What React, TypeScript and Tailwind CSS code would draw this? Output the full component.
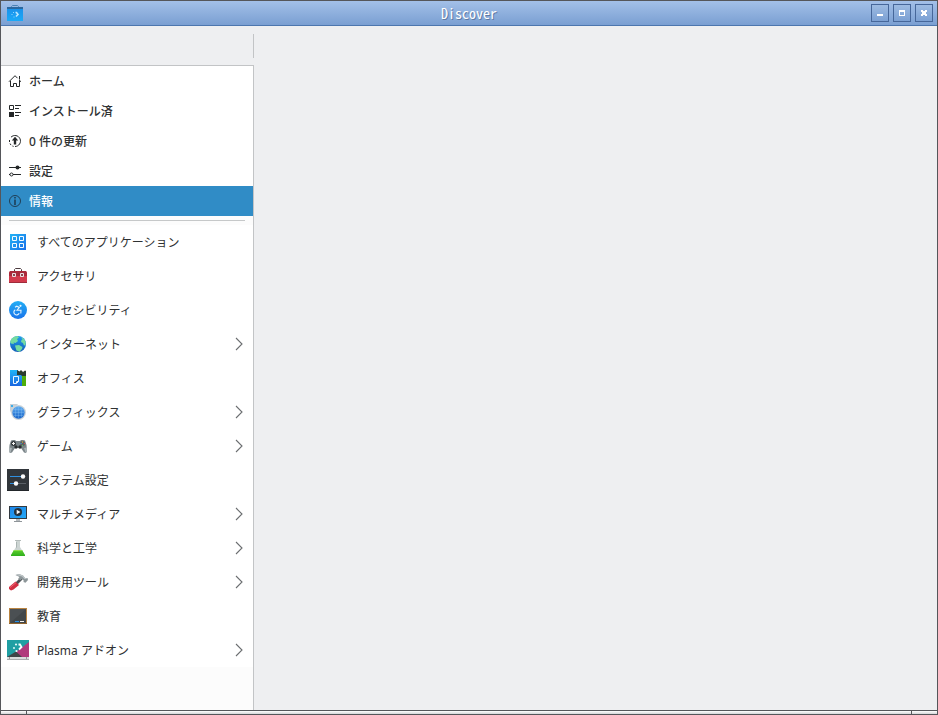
import { FC, ReactNode } from "react";

const HomeIcon: FC = () => (
  <svg className="size-4" viewBox="0 0 16 16" fill="none" stroke="#232627">
    <path d="M2 8.700 8 2.700 10.500 5.200M12 7l2 1.700M12.500 3v3.500" />
    <path d="M3.500 8v5.500h3v-3h3v3h3V8" />
    <path d="M7 10h2v1H7z" fill="#232627" stroke="none" />
  </svg>
);

const InstalledIcon: FC = () => (
  <svg className="size-4" viewBox="0 0 16 16" fill="none" stroke="#232627">
    <path d="M2.500 2.500h4v4h-4zM8 2.500h6M8 5.500h4M8 9.500h6M8 12.500h4" />
    <path d="M2 9h5v5H2z" fill="#232627" stroke="none" />
  </svg>
);

const UpdateIcon: FC = () => (
  <svg className="size-4" viewBox="0 0 16 16" fill="none" stroke="#232627">
    <path d="M4 4.200A5.500 5.500 0 1 1 8 13.500M2.500 7v2M3 10.500l1 1.600M5.400 13l1.200.4" />
    <path d="M8 3.800 11.200 7.500H9.200V11.500H6.800V7.500H4.800z" fill="#232627" stroke="none" />
  </svg>
);

const ConfigureIcon: FC = () => (
  <svg className="size-4" viewBox="0 0 16 16" fill="none" stroke="#232627">
    <path d="M2 4.500h12M2 11.500h1M6 11.500h8" />
    <circle cx="10.500" cy="4.500" r="2" fill="#232627" stroke="none" />
    <circle cx="4.500" cy="11.500" r="1.500" />
  </svg>
);

const InfoIcon: FC = () => (
  <svg className="size-4" viewBox="0 0 16 16" fill="none" stroke="#1f3f57">
    <circle cx="8" cy="8" r="5.500" />
    <path d="M8 4v1.500M8 6.500V12" strokeWidth="1.600" />
  </svg>
);

const AllAppsIcon: FC = () => (
  <svg className="size-[22px]" viewBox="0 0 22 22">
    <defs>
      <linearGradient id="all" x1="0" y1="0" x2="1" y2="1">
        <stop stopColor="#22b3f5" />
        <stop offset="1" stopColor="#1a6fe8" />
      </linearGradient>
    </defs>
    <path d="M3 3h16v16H3z" fill="url(#all)" />
    <path
      d="M5.500 5.500h4v4h-4zM12.500 5.500h4v4h-4zM5.500 12.500h4v4h-4zM12.500 12.500h4v4h-4z"
      fill="none"
      stroke="#f5fbff"
    />
  </svg>
);

const AccessoriesIcon: FC = () => (
  <svg className="size-[22px]" viewBox="0 0 22 22">
    <path d="M7.500 6v-1.500l1-1h5l1 1V6" fill="none" stroke="#4b3b3f" />
    <path d="M3 6h16l1 2v10H2V8z" fill="#d23a4c" />
    <path d="M3 6h16l1 2v3H2V8z" fill="#a92a3b" />
    <path d="M2 17h18v1H2z" fill="#9f2c3b" />
    <path d="M5.500 8.500h3v3h-3zM13.500 8.500h3v3h-3z" fill="#8c4650" stroke="#e8e2e3" />
  </svg>
);

const AccessibilityIcon: FC = () => (
  <svg className="size-[22px]" viewBox="0 0 22 22">
    <defs>
      <linearGradient id="acc" x1="0" y1="0" x2="0" y2="1">
        <stop stopColor="#22aef5" />
        <stop offset="1" stopColor="#1a73ea" />
      </linearGradient>
    </defs>
    <circle cx="11" cy="11" r="9" fill="url(#acc)" />
    <circle cx="13.500" cy="6.800" r="1.100" fill="#e5f4ff" />
    <g fill="none" stroke="#e5f4ff" strokeWidth="1.100">
      <path d="M8 8.200 9.800 7.200l2.500 1.200-2.200 2.800H14l-.2 3.300" />
      <path d="M8.300 10.700a2.800 2.800 0 1 0 3.900 3.600" />
    </g>
  </svg>
);

const InternetIcon: FC = () => (
  <svg className="size-[22px]" viewBox="0 0 22 22">
    <defs>
      <linearGradient id="net" x1="0" y1="0" x2="0" y2="1">
        <stop stopColor="#1f9cf0" />
        <stop offset="1" stopColor="#145fb8" />
      </linearGradient>
    </defs>
    <circle cx="11" cy="11" r="8" fill="url(#net)" />
    <path
      d="M3.200 9C4 5.500 7 3.200 10.500 3L12 4.500 10 6l1 2-2.500 2-2-.5L7 11l-3-.5zM14 4l3 2 1.700 3-.2 3-1.500.5-1-2.500-2-1 .5-2 1-.5zM8 12.500l4-.5 3.500 2-.5 2-2.500 2.700-3-1.200-1-3z"
      fill="#74dba0"
    />
  </svg>
);

const OfficeIcon: FC = () => (
  <svg className="size-[22px]" viewBox="0 0 22 22">
    <defs>
      <linearGradient id="off" x1="0" y1="0" x2="0" y2="1">
        <stop stopColor="#1fb6f6" />
        <stop offset="1" stopColor="#1a66e0" />
      </linearGradient>
    </defs>
    <path d="M3 3h8v4h4v12H3z" fill="url(#off)" />
    <path d="M15 8h4v11h-4z" fill="#4fae0c" />
    <path d="M10 3l2.500 1.500L14 3l2 2 2-1.500 1 .5v5h-4l-1-1h-4z" fill="#2b3b2e" />
    <path d="M6.500 9.500h5v5l-2 2h-3zM9.500 16v-1.500h2" fill="none" stroke="#eaf6ff" />
  </svg>
);

const GraphicsIcon: FC = () => (
  <svg className="size-[22px]" viewBox="0 0 22 22">
    <defs>
      <linearGradient id="gfx" x1="0" y1="0" x2="0" y2="1">
        <stop stopColor="#62aef0" />
        <stop offset="1" stopColor="#1762c8" />
      </linearGradient>
    </defs>
    <path d="M3 3h8l-7 9-1-3z" fill="#c9d0d6" />
    <circle cx="11.500" cy="11.500" r="7.500" fill="#cdd3d8" />
    <path d="M4 4h2v2H4z" fill="#3daee9" />
    <circle cx="11.500" cy="11.500" r="6.200" fill="url(#gfx)" />
    <path
      d="M8.500 6.500v10M11.500 5.500v12M14.500 6.500v10M6.500 8.500h10M5.500 11.500h12M6.500 14.500h10"
      stroke="#8fc9f7"
      strokeOpacity=".45"
      strokeWidth=".7"
    />
  </svg>
);

const GamesIcon: FC = () => (
  <svg className="size-[22px]" viewBox="0 0 22 22">
    <path
      d="M4 5.500 6 5h2l1 1h4l1-1h2l2 .5 1.500 4.500.5 6-1 2-2-.5-3-4.500H8L5 17.500 3 18l-1-2 .5-6z"
      fill="#7b8589"
    />
    <path
      d="M2.300 12.500 5 13l-1.500 4.500-1 .3-.5-2zM19.700 12.500 17 13l1.500 4.500 1-.3.500-2z"
      fill="#aab3b6"
    />
    <circle cx="6.500" cy="8.500" r="2.500" fill="#34393c" />
    <path d="M6.500 7v3M5 8.500h3" stroke="#f3f3f3" />
    <circle cx="15.500" cy="8.500" r="2.500" fill="#5a6265" />
    <path d="M15 6.500h1v1h-1z" fill="#f2c230" />
    <path d="M17 8h1v1h-1z" fill="#e05050" />
    <path d="M13.500 8h1v1h-1z" fill="#4ba7e8" />
    <path d="M15 10h1v1h-1z" fill="#5cc05c" />
    <circle cx="9" cy="12" r="1.700" fill="#272b2d" />
    <circle cx="13" cy="12" r="1.700" fill="#272b2d" />
  </svg>
);

const SettingsIcon: FC = () => (
  <svg className="size-[22px]" viewBox="0 0 22 22">
    <path d="M0 0h22v22H0z" fill="#31363b" />
    <path d="M0 21h22v1H0z" fill="#22262a" />
    <path d="M3 7.500h13M3 14.500h6" stroke="#2f8fe0" />
    <path d="M9 14.500h10" stroke="#5a6067" />
    <circle cx="16" cy="7.500" r="2.200" fill="#fcfcfc" />
    <circle cx="9" cy="14.500" r="2.200" fill="#fcfcfc" />
  </svg>
);

const MultimediaIcon: FC = () => (
  <svg className="size-[22px]" viewBox="0 0 22 22">
    <defs>
      <linearGradient id="mm" x1="0" y1="0" x2="1" y2="1">
        <stop stopColor="#1c86ea" />
        <stop offset="1" stopColor="#25a8f5" />
      </linearGradient>
    </defs>
    <path d="M2 3h18v13H2z" fill="#333a40" />
    <path d="M3 4h16v11H3z" fill="url(#mm)" />
    <path d="M9 16h4v2H9z" fill="#b5babd" />
    <path d="M7 18h8v1H7z" fill="#8f9599" />
    <circle cx="11" cy="9" r="4" fill="#24313c" />
    <path d="M9.700 6.700v4.600L13.500 9z" fill="#f4f6f7" />
  </svg>
);

const ScienceIcon: FC = () => (
  <svg className="size-[22px]" viewBox="0 0 22 22">
    <defs>
      <linearGradient id="sci" x1="0" y1="0" x2="0" y2="1">
        <stop stopColor="#5ed02c" />
        <stop offset="1" stopColor="#2fae1c" />
      </linearGradient>
    </defs>
    <path d="M9 4h4v6l5 8v1H4v-1l5-8z" fill="#ccd4d2" />
    <path d="M8 3h6v1H8z" fill="#b3bbb9" />
    <path d="M9 5h1v5l-1 1.500z" fill="#a9b4b1" />
    <path d="M7 13h8l3 5v1H4v-1z" fill="url(#sci)" />
    <path d="M7 13h8l.6 1H6.400z" fill="#8be04c" />
  </svg>
);

const DevelopmentIcon: FC = () => (
  <svg className="size-[22px]" viewBox="0 0 22 22">
    <path d="M14.500 7.500 9.500 12.500" stroke="#4a4f52" strokeWidth="2.800" />
    <path d="M8.500 10.500 12 14 6.500 18.500 4 19.500 2 18V16z" fill="#d02f42" />
    <path d="M3 16.500l6-4.800" stroke="#f06574" />
    <path
      d="M8.500 4 12 3l4 1.500 2 2.500h2.500l.5 2-2.500 2.700-2-.7.200-1.500-2-1.500-1.500 1.500-2-2L12.500 6z"
      fill="#8d9699"
    />
    <path d="M8.500 4 12 3l4 1.500 2 2.500h2l-.8 1h-1.700L15 5.500z" fill="#bdc4c6" />
  </svg>
);

const EducationIcon: FC = () => (
  <svg className="size-[22px]" viewBox="0 0 22 22">
    <path d="M2 3h18v16H2z" fill="#b98442" />
    <path d="M3 4h16v14H3z" fill="#4b5053" />
    <path d="M19 4v14H3z" fill="#424749" />
    <path d="M2 18h18v1H2z" fill="#8f6430" />
    <path d="M8 16.500h4" stroke="#2590e8" />
    <path d="M13 16.500h4" stroke="#f2f2f2" />
  </svg>
);

const PlasmaIcon: FC = () => (
  <svg className="size-[22px]" viewBox="0 0 22 22">
    <path d="M0 1h22v17H0z" fill="#1f9fa3" />
    <path d="M22 3v15h-9L9 13z" fill="#b03a7c" />
    <path d="M0 18l9-5.500 6 5.500z" fill="#3f4548" />
    <path d="M0 18h22v3H0z" fill="#d9dcdd" />
    <path d="M0 20h22v1H0z" fill="#a9acae" />
    <path d="M2 18.500h1v1H2zM19 18.500h1v1h-1z" fill="#555" />
    <path d="M11.500 5.500h1.500l1.500 2.500-2.500 2.500" fill="none" stroke="#f4ffff" strokeWidth="1.800" />
    <g fill="#f4ffff">
      <circle cx="9" cy="5.500" r="1" />
      <circle cx="7" cy="9" r=".9" />
      <circle cx="9.500" cy="12" r="1.100" />
    </g>
  </svg>
);

const AppIcon: FC = () => (
  <svg className="size-4" viewBox="0 0 16 16">
    <defs>
      <linearGradient id="bag" x1="0" y1="0" x2="0" y2="1">
        <stop stopColor="#1b8ee8" />
        <stop offset="1" stopColor="#1aaaf8" />
      </linearGradient>
    </defs>
    <path d="M4.500 3V1.500l1-1h5l1 1V3" fill="none" stroke="#4a82b5" />
    <path d="M0 2h16v14H0z" fill="url(#bag)" />
    <path d="M0 2h16v2H0z" fill="#2b689f" />
    <path d="M8.500 7.500h1l1.500 2-2 2" fill="none" stroke="#b9e6ff" strokeWidth="1.600" />
    <path d="M6 7h1v1H6zM4.500 9h1v1h-1zM6.500 11.500h1v1h-1z" fill="#8fd5ff" />
  </svg>
);

const Chevron: FC = () => (
  <svg
    className="h-[14px] w-2"
    viewBox="0 0 8 14"
    fill="none"
    stroke="#6b6e70"
    strokeWidth="1.100"
  >
    <path d="M1 1 7 7 1 13" />
  </svg>
);

const actions: { label: string; icon: ReactNode; active?: boolean }[] = [
  { label: "ホーム", icon: <HomeIcon /> },
  { label: "インストール済", icon: <InstalledIcon /> },
  { label: "0 件の更新", icon: <UpdateIcon /> },
  { label: "設定", icon: <ConfigureIcon /> },
  { label: "情報", icon: <InfoIcon />, active: true },
];

const categories: { label: string; icon: ReactNode; nested?: boolean }[] = [
  { label: "すべてのアプリケーション", icon: <AllAppsIcon /> },
  { label: "アクセサリ", icon: <AccessoriesIcon /> },
  { label: "アクセシビリティ", icon: <AccessibilityIcon /> },
  { label: "インターネット", icon: <InternetIcon />, nested: true },
  { label: "オフィス", icon: <OfficeIcon /> },
  { label: "グラフィックス", icon: <GraphicsIcon />, nested: true },
  { label: "ゲーム", icon: <GamesIcon />, nested: true },
  { label: "システム設定", icon: <SettingsIcon /> },
  { label: "マルチメディア", icon: <MultimediaIcon />, nested: true },
  { label: "科学と工学", icon: <ScienceIcon />, nested: true },
  { label: "開発用ツール", icon: <DevelopmentIcon />, nested: true },
  { label: "教育", icon: <EducationIcon /> },
  { label: "Plasma アドオン", icon: <PlasmaIcon />, nested: true },
];

const windowButton =
  "grid size-[18px] place-items-center border border-[#46679a] bg-linear-to-b from-[#9dbbe2] to-[#7ba0d3]";

const TitleBar: FC = () => (
  <header className="grid h-[25px] grid-cols-[1fr_auto_1fr] items-center border-b border-[#4c76ae] bg-linear-to-b from-[#a3c0e8] to-[#7a9fd2] px-1">
    <div className="flex px-0.5">
      <AppIcon />
    </div>
    <h1 className="font-['Noto_Sans_Mono_CJK_JP','Liberation_Mono',monospace] text-[14px] leading-5 text-white [text-shadow:1px_1px_0_#5f7ba5]">
      Discover
    </h1>
    <div className="flex justify-end gap-1">
      <button type="button" aria-label="最小化" className={windowButton}>
        <svg className="size-2" viewBox="0 0 8 8">
          <path d="M1 5h6v2H1z" fill="#fff" />
        </svg>
      </button>
      <button type="button" aria-label="最大化" className={windowButton}>
        <svg className="size-2" viewBox="0 0 8 8">
          <path d="M1 1h6v6H1zM2 3v3h4V3z" fill="#fff" fillRule="evenodd" />
        </svg>
      </button>
      <button type="button" aria-label="閉じる" className={windowButton}>
        <svg className="size-2" viewBox="0 0 8 8">
          <path d="M1 1h2v1h2V1h2v2H6v2h1v2H5V6H3v1H1V5h1V3H1z" fill="#fff" />
        </svg>
      </button>
    </div>
  </header>
);

const Sidebar: FC = () => (
  <aside className="flex w-[253px] shrink-0 flex-col">
    <div className="flex h-[39px] items-center justify-end">
      <div className="h-6 w-px bg-[#c2c4c6]" />
    </div>
    <nav className="flex flex-1 flex-col border-t border-r border-[#c2c4c6] bg-[#fcfcfc]">
      <ul className="bg-white">
        {actions.map(({ label, icon, active }) => (
          <li key={label}>
            <button
              type="button"
              className={`flex h-[30px] w-full items-center gap-1.5 pl-1.5 font-medium ${
                active ? "bg-[#308cc6] text-white" : "text-[#2f3233]"
              }`}
            >
              {icon}
              <span className="pt-0.5">{label}</span>
            </button>
          </li>
        ))}
      </ul>
      <hr className="mx-2 my-1 border-[#c6c8c9]" />
      <ul className="bg-white">
        {categories.map(({ label, icon, nested }) => (
          <li key={label}>
            <button
              type="button"
              className="flex h-[34px] w-full items-center gap-2 pr-2.5 pl-1.5 text-left text-[#2f3233]"
            >
              {icon}
              <span className="flex-1 pt-0.5">{label}</span>
              {nested && <Chevron />}
            </button>
          </li>
        ))}
      </ul>
    </nav>
  </aside>
);

const App: FC = () => {
  return (
    <div className="flex min-h-screen flex-col border border-[#55565a] bg-[#eeeff1] font-['Noto_Sans','Noto_Sans_CJK_JP',sans-serif] text-[12px] leading-4">
      <TitleBar />
      <div className="flex flex-1">
        <Sidebar />
        <main className="flex-1" />
      </div>
      <footer className="flex h-1 justify-between border-t border-[#55565a] bg-linear-to-b from-white to-[#d4d5d7] px-[25px]">
        <div className="w-px bg-[#55565a]" />
        <div className="w-px bg-[#55565a]" />
      </footer>
    </div>
  );
};

export default App;
